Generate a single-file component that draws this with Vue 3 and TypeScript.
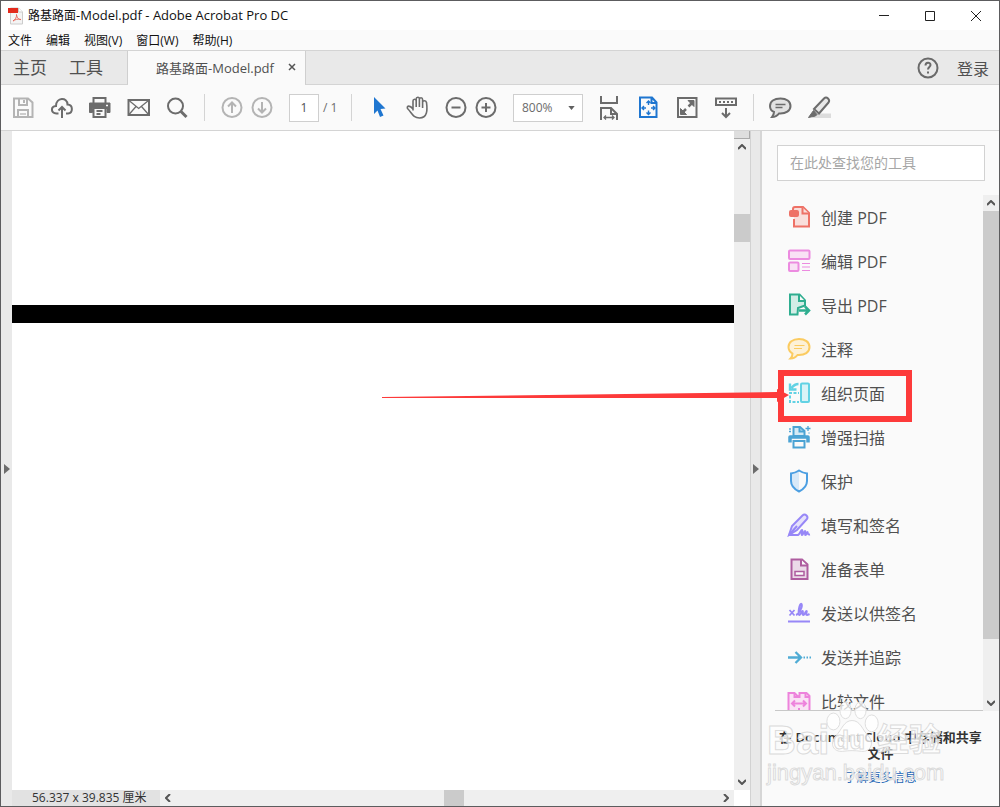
<script setup lang="ts">
import { ref } from 'vue'

interface Tool {
  id: string
  label: string
  color: string
  tint: string
  art: string
}

const menus: string[] = ['文件', '编辑', '视图(V)', '窗口(W)', '帮助(H)']
const page = ref('1')
const zoom = ref('800%')
const query = ref('')

const tools: Tool[] = [
  {
    id: 'create', label: '创建 PDF', color: '#ee7166', tint: '#f9dedb',
    art: '<path d="M7 14v7.500h15V8l-6-6H8Q6 2 6 4v2"/><path d="M15.500 2.500V8.500H22"/><rect x="3" y="6" width="8" height="5" rx="1" fill="#ee7166"/>',
  },
  {
    id: 'edit', label: '编辑 PDF', color: '#ec8be0', tint: '#f9e1f5',
    art: '<rect x="2" y="1.500" width="20.500" height="8.500" rx="1"/><rect x="2" y="13.500" width="9.500" height="8.500" rx="1"/><path d="M15 14.500h8M15 18h8M15 21.500h8" stroke-width="1.200"/>',
  },
  {
    id: 'export', label: '导出 PDF', color: '#2fae90', tint: '#d3ede6',
    art: '<path d="M10.500 21.500H3V1.500h9.500l5.500 6v5L11 15z"/><path d="M12 2v6h6" fill="#fafafa"/><path d="M12 17.500h9M18 13.500l4 4-4 4" fill="none" stroke-width="2.500"/>',
  },
  {
    id: 'comment', label: '注释', color: '#fbcb60', tint: '#fdf1d7',
    art: '<path d="M12 2C5.500 2 1.500 5.500 1.500 10c0 3 1.500 5 4 6.500 0 2-.500 3.500-2 5 3 0 5.500-1.500 7-3.500C18 18.500 22.500 15 22.500 10S18 2 12 2z"/><path d="M7.500 8.500h10M7 11.500h8" stroke-width="1.200"/>',
  },
  {
    id: 'organize', label: '组织页面', color: '#62d2e4', tint: '#d9f3f7',
    art: '<rect x="14" y="2.500" width="8" height="18.500" rx="1"/><path d="M2 12h10M3 14.500V21h9" fill="none" stroke-dasharray="3 1.500"/><path d="M11.500 3Q7.500 3 4.500 7M3 2.500V8.500h6.500" fill="none" stroke-width="2.400"/>',
  },
  {
    id: 'scan', label: '增强扫描', color: '#4ba3d4', tint: '#d5eaf5',
    art: '<path d="M6.500 11V2H13l4.500 4v5z"/><path d="M12.500 2v4.500h5" fill="none"/><path d="M3 17.500V12h18v5.500" fill="none" stroke-width="3.500" stroke-linejoin="round"/><path d="M6.500 16v6.500h11V16z" fill="#fafafa"/><path d="M21 1v5M18.500 3.500h5M3 3v2M2 6.500h2M22 7.500v1" fill="none" stroke-width="1.300"/>',
  },
  {
    id: 'protect', label: '保护', color: '#4c9fe2', tint: '#fafafa',
    art: '<path d="M12 2Q8 4 4 4.500V12c0 5 3 8 8 10.500z" fill="#d8e9f8" stroke="none"/><path d="M12 1.500Q8 4 4 4.500V12c0 5 3 8 8 10.500 5-2.500 8-5.500 8-10.500V4.500Q16 4 12 1.500z" fill="none"/>',
  },
  {
    id: 'fill', label: '填写和签名', color: '#9787f7', tint: '#e5e1fb',
    art: '<path d="M2 22l3-9L15.500 2.500q2-2 4 0t0 4L10 17z"/><path d="M2 22h9c2-1 3-5 4-5s-1 5 0 5 2-4 3-4-.500 4 .500 4 1.500-3 2-3-.500 3 2.500 2.500M2 22l8-9" fill="none"/>',
  },
  {
    id: 'form', label: '准备表单', color: '#ae5c9f', tint: '#ebd9e8',
    art: '<path d="M4.500 2.500h10.500l5.500 5V22h-16z"/><path d="M14 2.500v6h6" fill="#fafafa"/><rect x="8" y="14.500" width="9" height="4" fill="#fafafa" stroke-width="1.500"/>',
  },
  {
    id: 'send-sign', label: '发送以供签名', color: '#9787f7', tint: 'none',
    art: '<path d="M2.500 9l5 5.500M7.500 9l-5 5.500" stroke-width="1.800"/><path d="M9 14c3-1 7-9 5.500-11-2-1.500-4 10-2 11 2 0 1-4 3-4 1 0-.500 4 1 4s1.500-4 3-4c1 0-1.500 4 .500 4 1 0 1.500-.500 2.500-1"/><path d="M1 20.500h22"/>',
  },
  {
    id: 'track', label: '发送并追踪', color: '#50acd5', tint: 'none',
    art: '<path d="M1 12.500h13M8.500 7l5.500 5.500L8.500 18" stroke-width="2.300"/><path d="M16.500 12.500h8" stroke-dasharray="1.500 1.500"/>',
  },
  {
    id: 'compare', label: '比较文件', color: '#ed83dc', tint: '#fae2f5',
    art: '<path d="M1.500 4h6l4 4h1V4h7l3 3v16h-21z"/><path d="M7.500 4v4h4M18.500 4v4h4M12 19v4" fill="none"/><path d="M5 14.500h14M8 11.500l-3 3 3 3M16 11.500l3 3-3 3" fill="none"/>',
  },
]
</script>

<template>
  <div class="window">
    <header class="titlebar">
      <svg class="app-icon" viewBox="0 0 16 18" aria-hidden="true">
        <path d="M2.500 1h8l4 4v12h-12z" fill="#f4f4f4" stroke="#ccc" />
        <path d="M10.500 1v4h4" fill="#fff" stroke="#ccc" />
        <rect x="0" y="1" width="10" height="5" fill="#e32a1c" />
        <path d="M5 14c2-1 4-4 3.500-6.500C9 11 11 13 13 12.500 10 11.500 7 12.500 5 14z" fill="none" stroke="#e8695f" />
      </svg>
      <h1>路基路面<span>-Model.pdf - Adobe Acrobat Pro DC</span></h1>
      <div class="window-controls">
        <button type="button" aria-label="最小化"><svg viewBox="0 0 12 12"><path d="M1 5.500h10" /></svg></button>
        <button type="button" aria-label="最大化"><svg viewBox="0 0 12 12"><path d="M1.500 1.500h9v9h-9z" /></svg></button>
        <button type="button" aria-label="关闭"><svg viewBox="0 0 12 12"><path d="M1 1l10 10M11 1L1 11" /></svg></button>
      </div>
    </header>

    <nav class="menubar">
      <button v-for="menu in menus" :key="menu" type="button">{{ menu }}</button>
    </nav>

    <div class="tabs">
      <div class="home-tabs">
        <button type="button">主页</button>
        <button type="button">工具</button>
      </div>
      <div class="doc-tab">
        <button type="button" class="doc-name">路基路面-Model.pdf</button>
        <button type="button" class="close" aria-label="关闭标签">
          <svg viewBox="0 0 8 8"><path d="M1 1l6 6M7 1L1 7" /></svg>
        </button>
      </div>
      <div class="account">
        <button type="button" class="help" aria-label="帮助">
          <svg viewBox="0 0 22 22"><circle cx="11" cy="11" r="9.500" /><path d="M8.500 8.500c0-3.500 5-3.500 5-.500 0 2-2.500 2-2.500 4.500M11 14.500v2" /></svg>
        </button>
        <button type="button" class="login">登录</button>
      </div>
    </div>

    <div class="toolbar">
      <div class="group">
        <button type="button" class="off" aria-label="保存">
          <svg viewBox="0 0 24 24"><path d="M2 2.500h14l4.500 4v14.500H2z" /><path d="M7 3v6h8V3" /><path d="M12 4v3" /><path d="M6 21v-7h10v7" /><path d="M8 18h6" stroke-width="1.300" /></svg>
        </button>
        <button type="button" aria-label="上传">
          <svg viewBox="0 0 24 24"><path d="M8.500 17.500H6.500C.500 17 .500 10.500 6 10 6 1 17.500 1 17.500 8.500c6 .500 5.500 8.500.500 9h-2M12 22V11M8.500 14.500L12 11l3.500 3.500" /></svg>
        </button>
        <button type="button" aria-label="打印">
          <svg viewBox="0 0 24 24"><path d="M5.500 7V2h12v5" /><path d="M1.500 7h20.500v9.500H19v-4H4.500v4h-3z" fill="currentColor" stroke-width="1" /><path d="M5.500 12.500v8.500h12v-8.500M8.500 15h6M8.500 18h4" /><path d="M18 9.500h2" stroke="#fafafa" stroke-width="1.300" /></svg>
        </button>
        <button type="button" aria-label="邮件">
          <svg viewBox="0 0 24 24"><path d="M2.500 4H23v15H2.500z" /><path d="M3 4.500l9.700 8 9.800-8M3 18.500l7-8M22.500 18.500l-7-8" stroke-width="1.300" /></svg>
        </button>
        <button type="button" aria-label="查找">
          <svg viewBox="0 0 24 24"><circle cx="11.500" cy="10" r="7.500" /><path d="M17 15.500l5.500 5.500" stroke-width="3" /></svg>
        </button>
      </div>
      <span class="sep"></span>
      <div class="group tight">
        <button type="button" class="off" aria-label="上一页">
          <svg viewBox="0 0 24 24"><circle cx="12" cy="11.500" r="9.500" /><path d="M12 17V6.500M8 10.500l4-4 4 4" /></svg>
        </button>
        <button type="button" class="off" aria-label="下一页">
          <svg viewBox="0 0 24 24"><circle cx="12" cy="11.500" r="9.500" /><path d="M12 6v10.500M8 12.500l4 4 4-4" /></svg>
        </button>
      </div>
      <input v-model="page" class="page" type="text" aria-label="页码" />
      <span class="total">/ 1</span>
      <span class="sep"></span>
      <div class="group">
        <button type="button" class="blue" aria-label="选择">
          <svg viewBox="0 0 24 24"><path d="M7 1l11.500 11.500-5 .500 3 6.500-3.500 1.500-2.500-6.500L7 18z" fill="currentColor" stroke="none" /></svg>
        </button>
        <button type="button" aria-label="手形">
          <svg viewBox="0 0 24 24"><path d="M8 14.500V5q0-1.700 1.600-1.700T11.200 5v6V3q0-1.700 1.600-1.700T14.400 3v8V3.500q0-1.700 1.600-1.700t1.600 1.700V12 6.500q0-1.700 1.700-1.700T21.500 6.500C22.500 14 22.500 22 14.500 22 8 22 7 17 2.500 12.500 1.500 9.500 5 9 8 13" stroke-width="1.600" /></svg>
        </button>
        <div class="group tight">
          <button type="button" aria-label="缩小">
            <svg viewBox="0 0 24 24"><circle cx="13" cy="11.500" r="9.500" /><path d="M8.500 11.500h9" /></svg>
          </button>
          <button type="button" aria-label="放大">
            <svg viewBox="0 0 24 24"><circle cx="13" cy="11.500" r="9.500" /><path d="M8.500 11.500h9M13 7v9" /></svg>
          </button>
        </div>
      </div>
      <label class="zoom">
        <select v-model="zoom" aria-label="缩放比例">
          <option>400%</option>
          <option>800%</option>
        </select>
        <svg viewBox="0 0 8 5" aria-hidden="true"><path d="M0 0h8L4 5z" /></svg>
      </label>
      <div class="group wide">
        <button type="button" aria-label="适合宽度">
          <svg viewBox="0 0 24 24"><path d="M4 0v7h16V0M4 24V12h10l6 6v6M14 12v6h6" /><path d="M7 21.500h10M9 19.500l-2 2 2 2M15 19.500l2 2-2 2" stroke-width="1.300" /></svg>
        </button>
        <button type="button" class="blue" aria-label="适合页面">
          <svg viewBox="0 0 24 24"><path d="M4 1.500h12l4.500 5V21H4zM15.500 1.500V7h5" /><path d="M12.500 5v4M12.500 14.500v4M6 12h4M15 12h4M10.500 7l2-2 2 2M10.500 16.500l2 2 2-2M8 10l-2 2 2 2M17 10l2 2-2 2" stroke-width="1.400" /></svg>
        </button>
        <button type="button" aria-label="全屏">
          <svg viewBox="0 0 24 24"><path d="M3 2h18.500v19H3z" /><path d="M13.500 10.500L18 6M11 13l-4.500 4.500" stroke-width="2.500" /><path d="M13 4.500h6v6zM5.500 12.500v6h6z" fill="currentColor" stroke-width="1" /></svg>
        </button>
        <button type="button" aria-label="工具栏">
          <svg viewBox="0 0 24 24"><path d="M2 2.500h20V9H2z" /><path d="M5 6h14" stroke-dasharray="2 2" /><path d="M12 12v9M8 17l4 4 4-4" /></svg>
        </button>
      </div>
      <span class="sep snug"></span>
      <div class="group wide">
        <button type="button" aria-label="批注">
          <svg viewBox="0 0 24 24"><path d="M12.500 2.500C6 2.500 2 5.500 2 10c0 3 1.500 5 4 6 0 2-.500 3-2 5 3 0 5.500-1.500 7-3.500 7 .500 11.500-3 11.500-7.500s-4-7.500-10-7.500z" fill="#e2e2e2" /><path d="M7.500 8.500h10M7.500 11.500h7" stroke-width="1.300" /></svg>
        </button>
        <button type="button" aria-label="突出显示">
          <svg viewBox="0 0 24 24"><path d="M8 17.500h16V22H5z" fill="#dcdcdc" stroke="none" /><path d="M7 13L17 2.500q2-2 4 0t.500 4L12 17.500z" fill="#e8e8e8" /><path d="M6.500 14.500l3.500 4L8.500 20 1.500 21.500z" fill="currentColor" stroke-width="1" /></svg>
        </button>
      </div>
    </div>

    <main class="body">
      <button type="button" class="rail left" aria-label="展开导览窗格">
        <svg viewBox="0 0 6 10"><path d="M0 0l6 5-6 5z" /></svg>
      </button>

      <section class="document">
        <div class="canvas"><div class="stroke"></div></div>
        <div class="vscroll">
          <span class="split"></span>
          <button type="button" aria-label="向上"><svg viewBox="0 0 8 6"><path d="M0 5l4-4 4 4" /></svg></button>
          <span class="thumb"></span>
          <button type="button" class="end" aria-label="向下"><svg viewBox="0 0 8 6"><path d="M0 1l4 4 4-4" /></svg></button>
        </div>
        <div class="hscroll">
          <span class="size">56.337 x 39.835 厘米</span>
          <button type="button" aria-label="向左"><svg viewBox="0 0 6 8"><path d="M5 0L1 4l4 4" /></svg></button>
          <span class="track"><span class="thumb"></span></span>
          <button type="button" aria-label="向右"><svg viewBox="0 0 6 8"><path d="M1 0l4 4-4 4" /></svg></button>
        </div>
      </section>

      <button type="button" class="rail right" aria-label="折叠工具窗格">
        <svg viewBox="0 0 6 10"><path d="M0 0l6 5-6 5z" /></svg>
      </button>

      <aside class="tools">
        <input v-model="query" class="search" type="text" placeholder="在此处查找您的工具" aria-label="查找工具" />
        <div class="list-area">
          <ul class="list">
            <li v-for="tool in tools" :key="tool.id">
              <button type="button">
                <svg viewBox="0 0 24 24" :stroke="tool.color" :fill="tool.tint" aria-hidden="true" v-html="tool.art"></svg>
                {{ tool.label }}
              </button>
            </li>
          </ul>
          <div class="list-scroll">
            <button type="button" aria-label="向上"><svg viewBox="0 0 8 6"><path d="M0 5l4-4 4 4" /></svg></button>
            <span class="thumb"></span>
            <button type="button" class="end" aria-label="向下"><svg viewBox="0 0 8 6"><path d="M0 1l4 4 4-4" /></svg></button>
          </div>
        </div>
        <footer class="cloud">
          <p>在 Document Cloud 中存储和共享文件</p>
          <a href="#">了解更多信息</a>
        </footer>

        <svg class="pointer" viewBox="0 0 530 53" aria-hidden="true">
          <path d="M0 27L395 22v-3l12 6-12 7v-4L0 28z" fill="#fd3a3a" />
          <rect x="399" y="3" width="128" height="46" fill="none" stroke="#fd3a3a" stroke-width="6" />
        </svg>

        <div class="watermark" aria-hidden="true">
          <svg viewBox="0 0 60 60">
            <ellipse cx="9" cy="23" rx="7" ry="9" />
            <ellipse cx="22" cy="11" rx="6" ry="9" />
            <ellipse cx="38" cy="11" rx="6" ry="9" />
            <ellipse cx="50" cy="25" rx="7" ry="9" />
            <path d="M29 22c9 0 11 10 17 16 8 9 2 18-7 17-7-1-13-1-20 0-10 1-15-8-7-17 6-6 8-16 17-16z" />
          </svg>
          <span class="brand"><b>Bai</b><b class="du">du</b><b class="cn">经验</b></span>
          <span class="site">jingyan.baidu.com</span>
        </div>
      </aside>
    </main>
  </div>
</template>

<style>
body {
  margin: 0;
}
</style>

<style scoped>
.window {
  box-sizing: border-box;
  display: flex;
  flex-direction: column;
  height: 100vh;
  border: 1px solid #5c5c5e;
  background: #fafafa;
  color: #505050;
  font-family: "Open Sans", "Noto Sans CJK SC", sans-serif;
  font-size: 12px;
  overflow: hidden;
}

button {
  display: flex;
  align-items: center;
  justify-content: center;
  padding: 0;
  border: 0;
  background: none;
  color: inherit;
  font: inherit;
  white-space: nowrap;
}

svg {
  display: block;
  flex: none;
}

.titlebar {
  display: flex;
  align-items: center;
  height: 29px;
  padding-left: 7px;
  background: #fff;
  color: #111;
}

.app-icon {
  width: 16px;
  height: 18px;
}

h1 {
  flex: 1;
  margin: 0 0 0 4px;
  font-size: 12px;
  font-weight: 400;
  line-height: 18px;
}

h1 span {
  font-size: 13px;
}

.window-controls {
  display: flex;
}

.window-controls button {
  width: 46px;
  height: 28px;
}

.window-controls svg {
  width: 12px;
  height: 12px;
  fill: none;
  stroke: #222;
}

.menubar {
  display: flex;
  gap: 14px;
  height: 20px;
  padding-left: 7px;
  color: #111;
}

.tabs {
  display: flex;
  height: 35px;
  box-sizing: border-box;
  border-top: 1px solid #d4d4d4;
  background: #e9e9e9;
}

.home-tabs {
  display: flex;
  gap: 22px;
  box-sizing: border-box;
  width: 127px;
  padding-bottom: 2px;
  padding-left: 12px;
  border-right: 1px solid #cfcfcf;
  border-bottom: 1px solid #d4d4d4;
  font-size: 17px;
}

.doc-tab {
  display: flex;
  align-items: center;
  box-sizing: border-box;
  width: 177px;
  padding: 0 9px 2px 28px;
  background: #fafafa;
  font-size: 13px;
}

.close {
  margin-left: auto;
}

.close svg {
  width: 8px;
  height: 8px;
  stroke: #555;
  stroke-width: 1.5;
}

.account {
  display: flex;
  flex: 1;
  align-items: center;
  justify-content: flex-end;
  gap: 18px;
  padding-right: 10px;
  border-left: 1px solid #cfcfcf;
  border-bottom: 1px solid #d4d4d4;
  font-size: 16px;
}

.help svg {
  width: 22px;
  height: 22px;
  fill: none;
  stroke: #6a6a6a;
  stroke-width: 2;
}

.toolbar {
  display: flex;
  align-items: center;
  box-sizing: border-box;
  height: 46px;
  padding-left: 11px;
  border-bottom: 1px solid #d4d4d4;
  color: #6c6c6c;
}

.group {
  display: flex;
  gap: 14px;
}

.group.tight {
  gap: 6px;
}

.group.wide {
  gap: 15px;
}

.toolbar button {
  color: #6c6c6c;
}

.toolbar button.off {
  color: #b4b4b4;
}

.toolbar button.blue {
  color: #1f76d0;
}

.toolbar button svg {
  width: 24px;
  height: 24px;
  fill: none;
  stroke: currentColor;
  stroke-width: 2;
}

.sep {
  width: 1px;
  height: 27px;
  margin: 0 15px 0 16px;
  background: #d4d4d4;
}

.sep.snug {
  margin: 0 14px 0 15px;
}

.page {
  box-sizing: border-box;
  width: 30px;
  height: 28px;
  margin-left: 15px;
  padding: 0;
  border: 1px solid #cfcfcf;
  background: #fff;
  color: #505050;
  font: inherit;
  text-align: center;
}

.total {
  width: 12px;
  margin-left: 4px;
  white-space: nowrap;
}

.zoom {
  display: flex;
  align-items: center;
  box-sizing: border-box;
  width: 70px;
  height: 28px;
  margin: 0 14px 0 16px;
  padding-right: 7px;
  border: 1px solid #cfcfcf;
  background: #fff;
}

.zoom select {
  flex: 1;
  min-width: 0;
  padding: 0 0 0 8px;
  appearance: none;
  border: 0;
  background: none;
  color: #6c6c6c;
  font: inherit;
}

.zoom svg {
  width: 7px;
  height: 4px;
  fill: #606060;
}

.body {
  display: flex;
  flex: 1;
  min-height: 0;
}

.rail {
  box-sizing: border-box;
  width: 11px;
  background: #e9e9e9;
}

.rail.right {
  width: 12px;
  border-right: 2px solid #d6d6d6;
  border-left: 1px solid #d2d2d2;
}

.rail svg {
  width: 6px;
  height: 10px;
  fill: #6c6c6c;
}

.document {
  display: grid;
  flex: 1;
  grid-template-rows: 1fr 16px;
  grid-template-columns: 1fr 16px;
  min-width: 0;
  background: #fff;
}

.canvas {
  padding-top: 174px;
}

.stroke {
  height: 18px;
  background: #000;
}

.vscroll,
.list-scroll {
  display: flex;
  flex-direction: column;
  background: #efefef;
}

.vscroll button,
.list-scroll button {
  height: 16px;
}

.vscroll svg,
.list-scroll svg {
  width: 8px;
  height: 6px;
}

.vscroll svg,
.list-scroll svg,
.hscroll svg {
  fill: none;
  stroke: #555;
  stroke-width: 2;
}

.split {
  box-sizing: border-box;
  height: 8px;
  border-right: 1px solid #aaa;
  border-bottom: 1px solid #aaa;
  background: #dedede;
}

.vscroll .thumb {
  height: 28px;
  margin-top: 59px;
  background: #cbcbcb;
}

.vscroll .end,
.list-scroll .end {
  margin-top: auto;
}

.hscroll {
  display: flex;
  background: #efefef;
}

.hscroll svg {
  width: 6px;
  height: 8px;
}

.hscroll button {
  width: 16px;
}

.size {
  box-sizing: border-box;
  width: 148px;
  padding-left: 20px;
  background: #e2e2e2;
  color: #333;
  line-height: 16px;
}

.track {
  display: flex;
  flex: 1;
  justify-content: center;
}

.track .thumb {
  width: 20px;
  margin-left: 14px;
  background: #cbcbcb;
}

.tools {
  position: relative;
  display: flex;
  flex-direction: column;
  width: 237px;
}

.search {
  box-sizing: border-box;
  height: 36px;
  margin: 14px 14px 14px 15px;
  padding: 0 12px 2px;
  border: 1px solid #d2d2d2;
  background: #fff;
  color: #505050;
  font: inherit;
  font-size: 14px;
}

.search::placeholder {
  color: #a6a6a6;
  opacity: 1;
}

.list-area {
  display: flex;
  flex: 1;
  min-height: 0;
  padding-left: 13px;
}

.list {
  flex: 1;
  margin: 0;
  padding: 0;
  overflow: hidden;
  border-bottom: 1px solid #c8c8c8;
  list-style: none;
}

.list button {
  gap: 10px;
  height: 44px;
  padding: 0 0 1px 12px;
  color: #505050;
  font-size: 16px;
}

.list svg {
  width: 24px;
  height: 24px;
  stroke-width: 2;
}

.list-scroll {
  width: 16px;
}

.list-scroll .thumb {
  flex: 0 0 83%;
  background: #cbcbcb;
}

.cloud {
  height: 95px;
  padding: 18px 12px 0;
  box-sizing: border-box;
  color: #333;
  line-height: 16px;
  text-align: center;
}

.cloud p {
  margin: 0 0 9px;
  font-size: 13px;
  font-weight: 600;
}

.cloud a {
  color: #1a64b4;
  font-size: 12px;
  text-decoration: none;
}

.pointer {
  position: absolute;
  top: 239px;
  left: -380px;
  width: 530px;
  height: 53px;
  pointer-events: none;
}

.watermark {
  position: absolute;
  bottom: 20px;
  left: 5px;
  width: 182px;
  height: 86px;
  color: rgba(255, 255, 255, 0.8);
  font-family: "Liberation Sans", "Noto Sans CJK SC", sans-serif;
  pointer-events: none;
  -webkit-text-stroke: 1px rgba(215, 215, 215, 0.9);
}

.watermark svg {
  position: absolute;
  top: 0;
  left: 58px;
  width: 56px;
  height: 56px;
  fill: rgba(255, 255, 255, 0.75);
  stroke: #dcdcdc;
}

.brand {
  position: absolute;
  top: 18px;
  left: 0;
  display: flex;
  align-items: center;
  font-size: 40px;
  line-height: 44px;
}

.brand .du {
  margin-left: 4px;
  font-size: 26px;
}

.brand .cn {
  margin-left: 12px;
  font-size: 32px;
}

.site {
  position: absolute;
  bottom: 0;
  left: 0;
  font-size: 22px;
  line-height: 26px;
}
</style>
